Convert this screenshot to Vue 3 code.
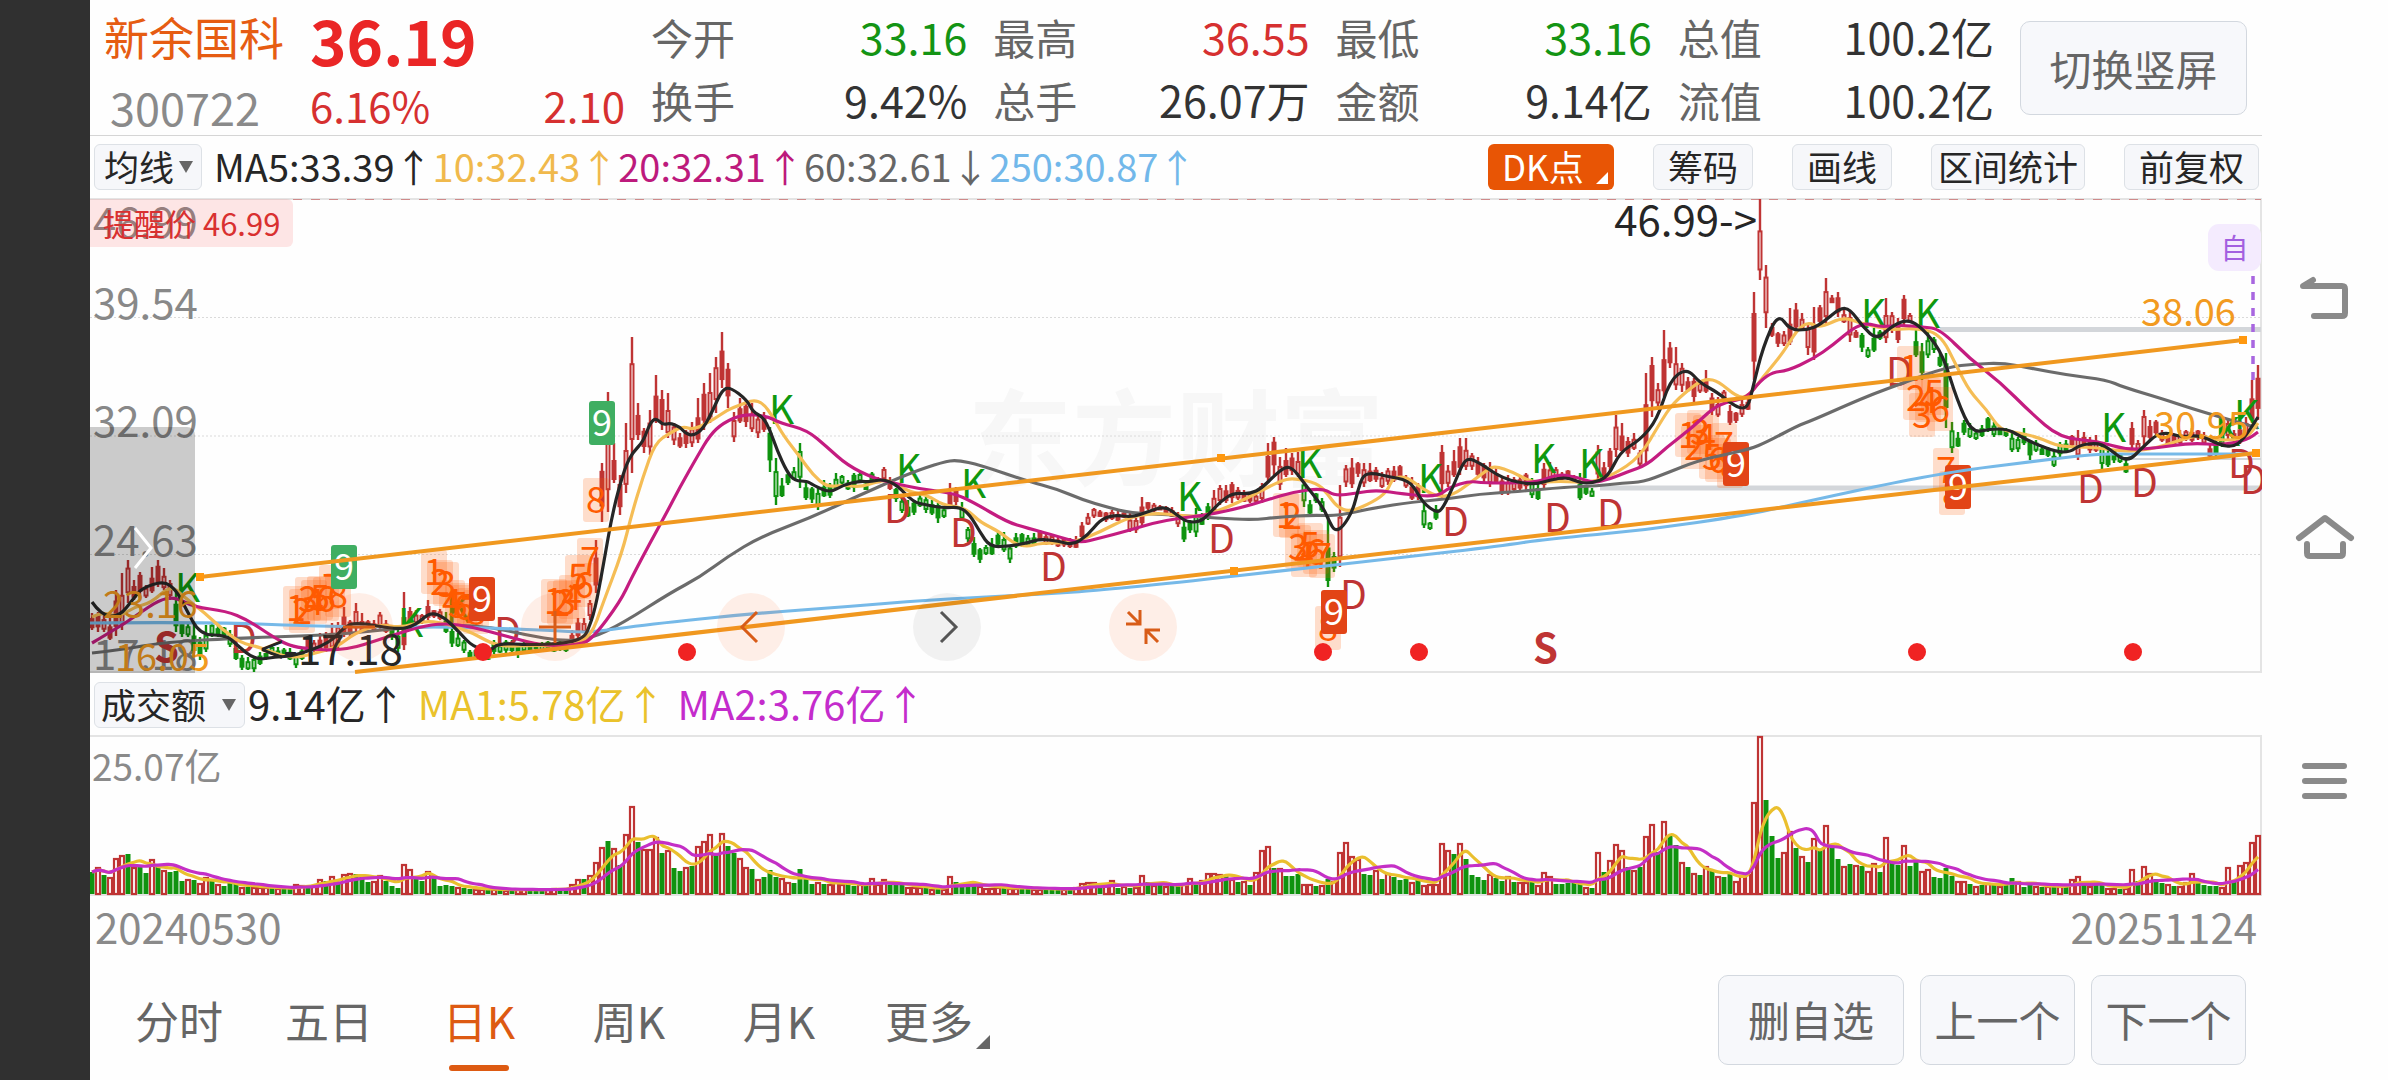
<template>
  <div class="screen">
    <div class="cutout"></div>

    <main class="content">
      <header class="quote">
        <div class="ident">
          <h1>新余国科</h1>
          <span class="code">300722</span>
        </div>
        <div class="price">
          <strong>36.19</strong>
          <div class="change">
            <span>6.16%</span>
            <span>2.10</span>
          </div>
        </div>
        <dl class="stats">
          <div v-for="s in stats" :key="s.label" class="stat">
            <dt>{{ s.label }}</dt>
            <dd :class="s.tone">{{ s.value }}</dd>
          </div>
        </dl>
        <button class="rotate" type="button">切换竖屏</button>
      </header>

      <div class="toolbar">
        <div class="pick">
          <select v-model="overlay" aria-label="主图指标">
            <option>均线</option>
          </select>
          <i class="caret"></i>
        </div>
        <div class="readout">
          <span v-for="m in maReadout" :key="m.text" :style="{ color: m.color }">{{ m.text }}</span>
        </div>
        <div class="tools">
          <button class="tool dk" type="button">DK点</button>
          <button class="tool" type="button">筹码</button>
          <button class="tool" type="button">画线</button>
          <button class="tool tight" type="button">区间统计</button>
          <button class="tool" type="button">前复权</button>
        </div>
      </div>

      <section class="kline">
        <svg class="plot" viewBox="90 198 2172 476">
          <text class="mark" x="968" y="478">东方财富</text>
          <g class="grid">
            <path d="M90 317.5H2261M90 436H2261M90 554.5H2261" />
          </g>
          <path class="frame" d="M90 199H2261V672H90" />
          <path class="limit" d="M293 199.500H2261" />
          <g class="axis">
            <text v-for="a in axis" :key="a.t" x="93" :y="a.y">{{ a.t }}</text>
          </g>

          <path d="M1940 329.500H2261M1600 488H2261" stroke="#d3d6da" stroke-width="5" />
          <path d="M2130 459H2261" stroke="#d3d6da" stroke-width="2" />

          <g v-for="c in candles" :key="c.x" :stroke="c.color" :fill="c.solid ? c.color : '#fff'">
            <path :d="`M${c.x} ${c.hi}V${c.top}M${c.x} ${c.bottom}V${c.lo}`" stroke-width="2.400" />
            <rect :x="c.x - 1.5" :y="c.top" width="3" :height="c.bottom - c.top" stroke-width="2" />
          </g>

          <g class="flags">
            <text v-for="(p, i) in kFlags" :key="'k' + i" class="k" :x="p[0] - 3" :y="p[1]">K</text>
            <text v-for="(p, i) in dFlags" :key="'d' + i" class="d" :x="p[0] - 3" :y="p[1]">D</text>
            <text class="s" x="154" y="662">S</text>
            <text class="s" x="1533" y="663">S</text>
          </g>

          <g class="counts">
            <g v-for="(n, i) in counts" :key="i">
              <rect :x="n.x" :y="n.y" width="26" height="44" rx="3" />
              <text :x="n.x + 13" :y="n.y + 35">{{ n.t }}</text>
            </g>
          </g>
          <g class="nines">
            <g v-for="(n, i) in nines" :key="i">
              <rect :x="n[0]" :y="n[1]" width="26" height="44" rx="3" :fill="n[2]" />
              <text :x="n[0] + 13" :y="n[1] + 35">9</text>
            </g>
          </g>

          <path v-for="l in maLines" :key="l.color" class="ma" :d="smooth(l.points)" :stroke="l.color" />

          <g class="channel">
            <path d="M200 577L2243 340M355 672L2256 453" />
            <rect v-for="(h, i) in handles" :key="i" :x="h[0] - 4" :y="h[1] - 4" width="8" height="8" />
          </g>

          <circle v-for="x in eventDots" :key="x" :cx="x" cy="652" r="9" fill="#f02323" />

          <text class="extreme" x="1757" y="236" text-anchor="end">46.99-></text>
          <text class="extreme" x="260" y="665">&lt;-17.18</text>
          <g class="channel-value">
            <text x="2141" y="326">38.06</text>
            <text x="2154" y="439">30.95</text>
            <text x="103" y="618">23.16</text>
            <text x="115" y="671">16.05</text>
          </g>
          <path d="M2253 276V380" stroke="#a866e0" stroke-width="3.500" stroke-dasharray="8 8" />
        </svg>

        <span class="alert">提醒价 46.99</span>
        <span class="self">自</span>
        <button class="drawer" type="button" aria-label="展开">
          <svg width="20" height="44" viewBox="0 0 20 44"><path d="M2 2L18 22L2 42" /></svg>
        </button>
        <div class="controls">
          <button type="button" aria-label="缩小">
            <svg viewBox="0 0 68 68"><path d="M18 34H50" /></svg>
          </button>
          <button type="button" aria-label="放大">
            <svg viewBox="0 0 68 68"><path d="M18 34H50M34 18V50" /></svg>
          </button>
          <button type="button" aria-label="左移">
            <svg viewBox="0 0 68 68"><path d="M40 19L25 34L40 49" /></svg>
          </button>
          <button class="plain" type="button" aria-label="右移">
            <svg viewBox="0 0 68 68"><path d="M28 19L43 34L28 49" /></svg>
          </button>
          <button type="button" aria-label="收起">
            <svg viewBox="0 0 68 68"><path d="M19 19L31 31M31 17V31H17M49 49L37 37M37 51V37H51" /></svg>
          </button>
        </div>
      </section>

      <div class="toolbar volume-bar">
        <div class="pick wide">
          <select v-model="indicator" aria-label="副图指标">
            <option>成交额</option>
          </select>
          <i class="caret"></i>
        </div>
        <div class="readout amount">
          <span>9.14亿↑</span>
          <span class="v1">MA1:5.78亿↑</span>
          <span class="v2">MA2:3.76亿↑</span>
        </div>
      </div>

      <section class="volume">
        <svg class="plot" viewBox="90 735 2172 161">
          <path class="frame" d="M90 736H2261V895H90" />
          <text class="peak" x="92" y="781">25.07亿</text>
          <template v-for="b in bars" :key="b.x">
            <rect v-if="b.up" :x="b.x - 2" :y="895 - b.h" width="4" :height="b.h - 1" fill="#fff" stroke="#bf3434" stroke-width="2.200" />
            <rect v-else :x="b.x - 2.5" :y="894 - b.h" width="5" :height="b.h" fill="#0f930f" />
          </template>
          <path class="ma" :d="average(5)" stroke="#eabf2e" />
          <path class="ma" :d="average(10)" stroke="#c42fc6" />
        </svg>
      </section>

      <div class="dates">
        <time>20240530</time>
        <time>20251124</time>
      </div>

      <footer class="bottom">
        <nav class="tabs">
          <button
            v-for="t in tabs"
            :key="t"
            type="button"
            :class="{ active: t === tab, more: t === '更多' }"
            @click="tab = t"
          >{{ t }}</button>
        </nav>
        <div class="actions">
          <button class="remove" type="button">删自选</button>
          <button type="button">上一个</button>
          <button type="button">下一个</button>
        </div>
      </footer>
    </main>

    <nav class="system">
      <button type="button" aria-label="返回">
        <svg viewBox="0 0 60 60"><path d="M19 47H47Q50 47 50 44V20Q50 17 47 17H8L18 11" /></svg>
      </button>
      <button type="button" aria-label="主页">
        <svg viewBox="0 0 60 60"><path d="M4 28L30 8L56 28M12 34V43Q12 46 15 46H45Q48 46 48 43V34" /></svg>
      </button>
      <button type="button" aria-label="菜单">
        <svg viewBox="0 0 60 60"><path d="M10 15H49M10 30H49M10 45H49" /></svg>
      </button>
    </nav>
  </div>
</template>

<script setup>
import { ref } from 'vue'

const overlay = ref('均线')
const indicator = ref('成交额')
const tabs = ['分时', '五日', '日K', '周K', '月K', '更多']
const tab = ref('日K')

const stats = [
  { label: '今开', value: '33.16', tone: 'down' },
  { label: '最高', value: '36.55', tone: 'up' },
  { label: '最低', value: '33.16', tone: 'down' },
  { label: '总值', value: '100.2亿' },
  { label: '换手', value: '9.42%' },
  { label: '总手', value: '26.07万' },
  { label: '金额', value: '9.14亿' },
  { label: '流值', value: '100.2亿' },
]

const maReadout = [
  { text: 'MA5:33.39↑', color: '#262626' },
  { text: '10:32.43↑', color: '#f0b94c' },
  { text: '20:32.31↑', color: '#bd1a7c' },
  { text: '60:32.61↓', color: '#666' },
  { text: '250:30.87↑', color: '#72b8ea' },
]

const axis = [
  { t: '46.99', y: 238 },
  { t: '39.54', y: 319 },
  { t: '32.09', y: 437 },
  { t: '24.63', y: 556 },
  { t: '17.18', y: 670 },
]

const RED = '#bf3434'
const GREEN = '#0f930f'

// one run per colour: first x, colour, then high,low of each candle
const runs = [
  [92, RED, '613,630 612,632 615,632 617,640 590,636 573,630 560,603 580,600 572,598 585,598 567,593 560,587 568,590 580,600'],
  [176, GREEN, '590,632 623,637 623,637 623,653 637,660 625,652 623,637 625,637 627,638 630,647 640,660 655,670 657,670 657,672 652,665 653,660 645,655 647,657 648,658 648,660 653,668 647,660'],
  [308, RED, '637,652 640,652 633,650 632,652 623,650 622,650 607,637 620,637 603,633 613,633 620,629 620,631 612,630 620,633'],
  [392, GREEN, '628,640 630,652'],
  [404, RED, '592,650 607,627 610,624 614,624 600,620 610,618 609,620'],
  [446, GREEN, '612,633 627,647 633,647 640,653 650,658 650,658 650,658 648,660 640,654 642,653 640,653 640,652 643,658 642,652 641,651 642,650 642,652 641,650 643,652 641,651 642,652'],
  [572, RED, '630,643 618,640 618,633 600,620 540,593 463,522 392,512 443,483 475,515 423,493 337,473 403,440 428,453 410,455 375,423 390,430 393,438 423,445 433,448 430,448 422,447 398,443 383,430 373,423 357,413 332,388 363,408 412,442 398,423 400,427 403,432 415,438 412,432'],
  [770, GREEN, '427,472 458,505 478,497 472,485 467,480 443,488 482,500 487,503 487,510 480,497 483,498 473,490 475,485 480,490 473,492 472,482 480,490 472,482'],
  [878, RED, '477,483 467,482 477,490'],
  [896, GREEN, '488,502 497,513 500,517 500,515 493,507 497,513 500,515 503,523 507,518'],
  [950, RED, '483,508 487,505'],
  [962, GREEN, '502,520 527,542 537,557 548,563 545,555 538,555 532,547 532,552 545,563 533,548 533,547 535,547 533,545'],
  [1040, RED, '530,540 532,545 535,545 537,547 538,547 538,548 536,548 522,540 513,525 508,518 510,517 512,522 510,520 510,521 512,518 513,532 518,533 497,527 502,510 503,512 505,510 506,514 507,517 512,527'],
  [1184, GREEN, '520,542 520,533 508,537 513,525 503,520'],
  [1214, RED, '490,512 485,505 485,503 482,503 487,500 490,502 492,503 493,502 483,503 443,483 437,475 457,490 448,477 453,475 452,477'],
  [1304, GREEN, '480,507 500,515 493,503 498,512 517,587 552,572'],
  [1340, RED, '485,567 465,487 458,488 462,477 463,487 463,482 467,482 472,488 468,485 466,482 465,480 475,488 477,500 483,500'],
  [1424, GREEN, '500,528 522,530 505,520'],
  [1442, RED, '445,498 465,487 450,477 438,475 438,470 453,470 457,477 463,483 462,487 467,483 477,495 475,495 477,493 475,490 473,490'],
  [1532, GREEN, '478,498 480,500'],
  [1544, RED, '463,490 462,483 467,483 472,480 470,480 475,483'],
  [1580, GREEN, '473,500 485,495 488,497'],
  [1598, RED, '445,483 462,480 448,473 415,457 423,453 437,457 433,450 450,468 373,465 357,417 383,407 330,397 342,368 347,390 363,392 377,392 378,403 380,393 370,393 393,415 397,417 390,403 405,425 412,423 400,417 397,410 292,380 199,280 265,328 323,337 332,347 331,346 308,345 303,333 313,330 323,355 307,360 305,327 278,325 295,303 292,317 310,323 312,342 330,338'],
  [1862, GREEN, '333,352 347,358 328,352 330,340'],
  [1886, RED, '298,343 312,333 318,343 295,327 313,323'],
  [1916, GREEN, '330,357 343,380 330,358 337,353 353,367 353,428 422,453 432,447 420,435 423,438 432,440 425,437 417,432 422,437 427,435 428,437 430,452 437,452 428,445 440,460 440,452 445,455 447,457 450,467 442,457 440,453'],
  [2072, RED, '435,448 430,460 432,445 437,453 435,452'],
  [2102, GREEN, '442,470 450,467 450,463 453,463 457,473'],
  [2132, RED, '422,450 440,450 410,445 420,440 420,437 430,442 432,445 434,446 430,444 430,441 428,442 430,440 432,445 443,457'],
  [2216, GREEN, '440,457 420,447'],
  [2228, RED, '420,440 430,442 428,444 417,440 380,423 365,420'],
]

const candles = runs.flatMap(([start, color, list]) =>
  list.split(' ').map((pair, i) => {
    const [hi, lo] = pair.split(',').map(Number)
    const x = start + i * 6
    const n = (x / 2) % 7
    const top = hi + ((lo - hi) * (15 + n * 5)) / 100
    const bottom = lo - ((lo - hi) * (28 - n * 3)) / 100
    return { x, color, hi, lo, top, bottom, solid: n % 2 === 0 }
  })
)

const maLines = [
  {
    color: '#6b6b6b',
    points:
      '92,653 119,650 166,642 241,638 301,636 344,634 391,629 455,625 491,627 526,635 562,641 590,639 623,623 670,593 700,577 727,557 760,537 810,518 860,495 910,473 943,462 957,460 980,465 1027,481 1057,489 1083,500 1107,507 1130,513 1173,515 1217,518 1253,520 1280,517 1313,515 1337,516 1373,508 1413,502 1447,499 1480,494 1513,492 1567,487 1597,486 1623,483 1643,482 1667,473 1697,461 1723,455 1750,449 1767,442 1797,426 1813,420 1847,405 1873,394 1903,383 1947,367 1975,364 2003,363 2030,368 2067,375 2107,380 2123,387 2163,399 2190,408 2220,417 2258,428',
  },
  {
    color: '#76b9e8',
    points:
      '90,623 205,622 312,626 384,627 473,627 580,632 593,632 660,623 760,613 843,607 927,600 1027,595 1060,593 1090,591 1173,583 1307,568 1407,557 1500,546 1547,539 1647,530 1747,515 1813,500 1897,482 1947,473 1980,468 2030,462 2093,454 2133,454 2213,454 2257,454',
  },
  {
    color: '#f5bd55',
    points:
      '92,617 101,612 119,617 134,607 151,603 171,585 184,597 205,613 223,630 241,643 259,647 291,659 316,653 337,647 355,633 380,624 401,628 426,620 451,625 473,633 498,647 537,645 569,647 591,637 603,603 622,553 632,513 643,477 655,443 670,433 683,426 693,430 713,420 727,410 740,405 753,400 763,403 773,417 783,435 800,457 813,475 827,487 843,485 860,487 877,482 887,480 897,485 910,492 927,495 943,505 960,507 970,512 980,522 1000,532 1013,543 1027,547 1040,543 1073,543 1100,532 1127,518 1153,513 1177,515 1200,517 1220,510 1237,503 1257,493 1280,481 1293,478 1317,483 1327,493 1337,507 1350,512 1373,502 1387,492 1393,477 1407,477 1420,487 1437,497 1453,495 1470,483 1487,470 1495,466 1513,472 1533,483 1560,481 1590,483 1613,475 1640,457 1660,423 1673,403 1697,383 1707,379 1718,381 1737,397 1748,397 1763,377 1783,353 1797,330 1808,322 1820,328 1843,317 1860,323 1877,327 1893,330 1913,328 1940,333 1957,367 1970,392 1987,410 2000,430 2020,433 2040,438 2060,447 2093,447 2127,452 2157,448 2180,440 2200,435 2217,440 2233,440 2247,438 2258,423',
  },
  {
    color: '#c41c80',
    points:
      '92,643 119,627 137,615 159,600 175,597 194,607 226,611 248,620 273,637 294,648 344,651 384,638 419,627 444,623 473,627 509,637 544,646 580,645 593,638 620,602 632,577 650,543 667,512 680,487 697,457 710,435 723,423 743,414 767,416 780,423 807,430 827,447 847,465 873,478 893,483 920,489 953,493 973,502 1007,522 1027,528 1060,537 1080,543 1100,538 1127,531 1153,523 1180,518 1207,515 1240,508 1267,500 1293,492 1323,488 1335,496 1357,493 1377,490 1403,494 1437,497 1450,487 1470,481 1483,483 1537,483 1557,474 1577,477 1593,483 1610,479 1627,472 1647,465 1667,447 1693,427 1713,408 1727,402 1747,398 1760,381 1773,372 1787,371 1813,359 1833,345 1853,328 1867,323 1880,327 1900,325 1923,327 1940,329 1970,359 2000,382 2030,412 2060,438 2097,441 2127,450 2157,448 2190,443 2223,445 2247,440 2258,432',
  },
  {
    color: '#262626',
    points:
      '92,602 101,615 119,617 134,598 142,588 164,581 176,590 185,607 200,635 226,635 237,645 255,660 275,657 294,656 330,643 344,627 357,622 398,630 416,625 430,612 444,617 459,632 473,647 491,651 498,643 530,645 569,643 584,637 588,630 595,610 603,567 613,510 625,467 633,452 643,442 650,423 656,418 663,425 670,423 680,427 685,433 693,436 703,429 713,410 722,390 730,387 747,400 753,412 763,417 770,430 777,450 787,472 795,481 807,481 813,485 830,493 843,485 860,481 870,482 883,479 897,485 913,502 927,505 943,508 960,507 970,515 980,532 990,547 1010,546 1027,543 1040,539 1058,541 1073,545 1088,535 1100,520 1113,515 1133,517 1147,512 1165,506 1177,515 1187,522 1200,522 1210,513 1220,502 1233,493 1250,494 1262,488 1275,475 1285,467 1293,468 1307,487 1323,507 1330,523 1335,531 1343,527 1353,510 1358,490 1363,475 1373,473 1390,477 1403,479 1413,485 1423,503 1437,513 1443,508 1453,487 1462,465 1468,458 1480,463 1503,479 1533,485 1550,480 1567,477 1580,483 1593,483 1608,477 1620,452 1640,440 1657,420 1670,380 1687,368 1700,383 1717,392 1737,408 1748,408 1753,387 1763,347 1778,313 1790,330 1807,330 1820,325 1840,308 1850,309 1863,327 1877,340 1893,325 1910,319 1927,333 1943,355 1957,400 1972,433 1990,429 2007,429 2020,436 2033,443 2057,452 2070,452 2080,445 2097,443 2107,447 2127,463 2143,447 2157,434 2170,433 2180,437 2200,435 2220,445 2233,447 2243,440 2258,417',
  },
]

// rounds the corners of a polyline through the midpoints of its segments
function smooth(points) {
  const p = points.split(' ').map((s) => s.split(',').map(Number))
  let d = `M${p[0]}`
  for (let i = 1; i < p.length - 1; i++) {
    d += `Q${p[i]} ${(p[i][0] + p[i + 1][0]) / 2},${(p[i][1] + p[i + 1][1]) / 2}`
  }
  return d + `L${p[p.length - 1]}`
}

const kFlags = [
  [178, 602], [401, 637], [449, 623], [772, 424], [899, 483], [964, 498], [1180, 511], [1300, 478],
  [1421, 493], [1534, 473], [1582, 478], [1864, 328], [1918, 328], [2104, 442], [2237, 429], [2218, 446],
]
const dFlags = [
  [233, 653], [497, 646], [887, 523], [953, 547], [1043, 581], [1211, 553], [1343, 609], [1445, 536],
  [1547, 532], [1600, 528], [1889, 386], [2080, 503], [2134, 497], [2231, 478], [2243, 494],
]

// nine-turn counting, digits 1 to 8: x of the first box, then the box tops
const counts = [
  [283, [586, 589, 577, 580, 576, 577, 565, 573]],
  [421, [550, 560, 562, 580, 583, 585, 588, 590]],
  [541, [579, 581, 580, 575, 555, 563, 538, 478]],
  [1273, [493, 494, 525, 533, 523, 530, 534, 606]],
  [1675, [413, 425, 410, 415, 435, 438, 423, 444]],
  [1897, [346, 376, 393, 378, 371, 387, 448, 471]],
].flatMap(([x, tops]) => tops.map((y, i) => ({ x: x + i * 6, y, t: i + 1 })))

const nines = [
  [331, 545, '#3fae62'],
  [589, 401, '#3fae62'],
  [469, 577, '#e24416'],
  [1321, 590, '#e24416'],
  [1723, 442, '#e24416'],
  [1945, 465, '#e24416'],
]

const handles = [[200, 577], [1221, 458], [2243, 340], [1234, 571], [2256, 453]]
const eventDots = [483, 687, 1323, 1419, 1917, 2133]

const turnover =
  '22g 27r 19g 17r 36r 39r 40g 27r 27g 21g 35r 27g 24r 22g 23g 13g 15r 14g 11r 17r 14g 10r 8g 11g 10g 7r 7g 7r 7r 7r ' +
  '6g 6r 5g 5g 10r 9r 9g 9r 15r 13g 18r 12g 20r 21r 20g 19g 12g 13r 19r 13g 8g 6g 30r 25r 16g 13g 23r 16g 8g 9g ' +
  '8g 7r 6g 5g 5r 5r 5g 5r 4g 4r 4g 5r 5r 4g 4g 4g 5r 6r 4g 5g 10r 15r 15g 19r 32r 47r 53g 46r 29g 60r ' +
  '88r 52g 45r 45r 57r 41g 44r 26g 23g 27r 28g 48r 53r 60r 41g 61r 48g 41g 36r 27r 25g 15r 17g 24g 17g 16r 12r 11g 25g 15g ' +
  '10g 12r 10g 10r 13r 10r 10g 8g 10r 8g 16r 10r 15r 9g 9g 9g 7r 7r 7r 6g 5r 5g 5r 18r 12g 10g 10g 10g 8r 6r ' +
  '6r 7r 6g 6r 6r 6g 6g 5r 5r 5g 5g 5g 5r 5g 7r 11r 12r 12r 6g 9r 14r 6g 8r 6g 7r 19r 12g 9r 9g 8r ' +
  '9g 9g 10r 16r 9g 14r 21r 21r 20r 18g 15r 12g 13r 9g 22r 44r 48r 26g 26r 18g 18g 20g 10r 10r 8g 9r 15g 13r 42r 52r ' +
  '38r 35r 20g 19g 24r 15g 21r 17g 14g 15g 12r 15g 9r 10r 10r 51r 44r 40g 51r 35g 19g 17g 14g 20r 16g 13g 18r 12g 12r 12r ' +
  '12g 9r 22r 18r 10g 10g 11g 11g 10g 7r 6g 42r 22g 34r 50r 44r 27g 24r 27g 58r 70r 42g 73r 58g 49g 32r 27g 21r 19g 28r ' +
  '24g 18r 17g 20g 13r 19r 20r 92r 158r 94g 58g 36g 42r 63r 46g 38r 32g 56r 44g 69r 47g 35g 28r 30g 29r 28g 23r 31r 22g 57r ' +
  '31g 29g 49r 28g 32g 23r 25r 17g 16g 26g 18g 13r 13r 10g 8r 9g 11r 11g 8r 9g 16g 13r 7g 10g 8r 7g 8r 7g 8r 7g ' +
  '15r 18r 10g 8r 9g 9g 6r 6r 5g 6r 25r 13g 28r 21r 15g 11g 10r 8g 8r 12r 21r 11g 9g 8g 8g 7r 27r 14g 29r 32r 52r 59r'

const bars = turnover.split(' ').map((s, i) => ({
  x: 92 + i * 6,
  h: parseInt(s),
  up: s.endsWith('r'),
}))

function average(days) {
  const points = bars.map((b, i) => {
    const part = bars.slice(Math.max(0, i - days + 1), i + 1)
    const mean = part.reduce((sum, v) => sum + v.h, 0) / part.length
    return `${b.x},${(894 - mean).toFixed(1)}`
  })
  return smooth(points.join(' '))
}
</script>

<style>
body {
  margin: 0;
  background: #fefefe;
}
</style>

<style scoped>
.screen {
  display: flex;
  min-height: 100vh;
  font-family: "Noto Sans CJK SC", sans-serif;
  color: #666;
}
button,
select {
  font-family: inherit;
  cursor: pointer;
}
.cutout {
  flex: none;
  width: 90px;
  background: #303030;
}
.content {
  flex: 1;
  min-width: 0;
}

/* quote header */
.quote {
  display: flex;
  height: 135px;
  border-bottom: 1px solid #d5d5d5;
}
.ident {
  width: 206px;
  padding-left: 14px;
}
h1 {
  margin: 7px 0 0;
  font-size: 45px;
  line-height: 60px;
  font-weight: 400;
  color: #e65c12;
}
.code {
  display: block;
  padding-left: 6px;
  margin-top: 10px;
  font-size: 45px;
  line-height: 60px;
  color: #8a8a8a;
}
.price {
  width: 315px;
  color: #d63030;
}
.price strong {
  display: block;
  margin-top: 3px;
  font-size: 62px;
  line-height: 72px;
  color: #ea2626;
}
.change {
  display: flex;
  justify-content: space-between;
  font-size: 42px;
  line-height: 60px;
}
.stats {
  flex: 1;
  display: grid;
  grid-template-columns: repeat(4, 1fr);
  grid-auto-rows: 63px;
  column-gap: 26px;
  margin: 5px 26px 0;
  font-size: 42px;
  line-height: 63px;
}
.stat {
  display: flex;
  justify-content: space-between;
}
.stat dd {
  margin: 0;
  font-size: 43px;
  color: #333;
}
.stat .up {
  color: #d63030;
}
.stat .down {
  color: #149414;
}
.rotate {
  width: 227px;
  height: 94px;
  margin: 21px 15px 0 0;
  padding: 0;
  border: 1px solid #d3d8df;
  border-radius: 10px;
  background: #f7f8fb;
  font-size: 42px;
  line-height: 92px;
  color: #666;
}

/* indicator rows */
.toolbar {
  display: flex;
  align-items: center;
  height: 62px;
  padding: 0 3px 0 4px;
}
.volume-bar {
  height: 61px;
}
.pick {
  position: relative;
}
.pick select {
  box-sizing: border-box;
  display: block;
  width: 108px;
  height: 46px;
  padding: 0 0 2px 9px;
  border: 1px solid #dde1e6;
  border-radius: 6px;
  background: #f6f7fa;
  appearance: none;
  font-size: 35px;
  line-height: 42px;
  color: #262626;
}
.pick.wide select {
  width: 151px;
  padding-left: 6px;
}
.caret {
  position: absolute;
  top: 17px;
  right: 9px;
  border: 7px solid transparent;
  border-top: 12px solid #666;
  border-bottom: 0;
  pointer-events: none;
}
.readout {
  display: flex;
  padding: 0 0 2px 12px;
  font-size: 38px;
  line-height: 58px;
  white-space: nowrap;
}
.readout.amount {
  gap: 12px;
  padding: 0 0 4px 3px;
  font-size: 40px;
  color: #262626;
}
.v1 {
  color: #eac22b;
}
.v2 {
  color: #c42ccc;
}
.tools {
  display: flex;
  gap: 39px;
  margin-left: auto;
}
.tool {
  height: 46px;
  padding: 0 14px 2px;
  border: 1px solid #dde1e6;
  border-radius: 6px;
  background: #f6f7fa;
  font-size: 35px;
  line-height: 42px;
  color: #262626;
}
.tool.tight {
  padding: 0 6px 2px;
}
.tool.dk {
  position: relative;
  width: 126px;
  padding: 0 14px 2px;
  border: 0;
  background: #e85505;
  text-align: left;
  color: #fff;
}
.tool.dk::after {
  content: "";
  position: absolute;
  right: 6px;
  bottom: 6px;
  border-left: 12px solid transparent;
  border-bottom: 12px solid #fff;
}

/* charts */
.kline {
  position: relative;
}
.plot {
  display: block;
  width: 100%;
  height: auto;
  fill: none;
}
.plot text {
  fill: currentColor;
}
.mark {
  font-size: 104px;
  font-weight: 700;
  color: #f7f7f7;
}
.grid path {
  stroke: #dadada;
  stroke-dasharray: 2 2;
}
.frame {
  stroke: #e4e4e4;
  stroke-width: 2;
}
.limit {
  stroke: #cf8a8a;
  stroke-dasharray: 9 9;
}
.axis {
  font-size: 42px;
  color: #888;
}
.flags {
  font-size: 39px;
}
.k {
  color: #0f980f;
}
.d {
  color: #bf3434;
}
.s {
  font-size: 40px;
  font-weight: 700;
  color: #bf3434;
}
.counts rect {
  fill: #ff5a00;
  fill-opacity: 0.2;
}
.counts text,
.nines text {
  font-size: 36px;
  text-anchor: middle;
}
.counts {
  color: #ff5a00;
}
.nines {
  color: #fff;
}
.ma {
  stroke-width: 3.2;
  stroke-linejoin: round;
}
.channel path {
  stroke: #f0981f;
  stroke-width: 4;
}
.channel rect {
  fill: #ff980f;
}
.extreme {
  font-size: 42px;
  color: #262626;
}
.channel-value {
  font-size: 38px;
  color: #f29a20;
}
.peak {
  font-size: 37px;
  color: #8a8a8a;
}
.alert {
  position: absolute;
  top: 1px;
  left: 0;
  width: 190px;
  padding-left: 13px;
  border-radius: 0 6px 6px 0;
  background: rgba(250, 60, 60, 0.13);
  font-size: 31px;
  line-height: 48px;
  white-space: nowrap;
  color: #d93030;
}
.self {
  position: absolute;
  top: 26px;
  right: 1px;
  width: 53px;
  border-radius: 11px;
  background: #f4ebfe;
  font-size: 28px;
  line-height: 47px;
  text-align: center;
  color: #a35fe0;
}
.drawer {
  position: absolute;
  left: 0;
  bottom: 1px;
  width: 105px;
  height: 246px;
  padding: 0;
  border: 0;
  border-radius: 0 8px 0 0;
  background: rgba(0, 0, 0, 0.2);
}
.drawer svg {
  fill: none;
  stroke: #fff;
  stroke-width: 3;
}
.controls {
  position: absolute;
  left: 235px;
  bottom: 13px;
  display: flex;
  gap: 128px;
}
.controls button {
  width: 68px;
  height: 68px;
  padding: 0;
  border: 0;
  border-radius: 50%;
  background: rgba(255, 100, 30, 0.1);
}
.controls .plain {
  background: rgba(0, 0, 0, 0.05);
}
.controls svg {
  display: block;
  fill: none;
  stroke: #d85c18;
  stroke-width: 3;
}
.controls .plain svg {
  stroke: #555;
}
.dates {
  display: flex;
  justify-content: space-between;
  padding: 0 5px;
  font-size: 42px;
  line-height: 60px;
  color: #8a8a8a;
}

/* period tabs */
.bottom {
  display: flex;
  justify-content: space-between;
  margin-top: 19px;
  padding: 0 16px;
}
.tabs {
  display: flex;
}
.tabs button {
  position: relative;
  width: 150px;
  height: 96px;
  padding: 0 4px 6px 0;
  border: 0;
  background: none;
  font-size: 44px;
  line-height: 90px;
  color: #666;
}
.tabs .active {
  color: #dd5a12;
}
.tabs .active::after {
  content: "";
  position: absolute;
  left: 43px;
  bottom: 0;
  width: 60px;
  height: 6px;
  border-radius: 3px;
  background: #dd5a12;
}
.tabs .more::after {
  content: "";
  position: absolute;
  right: 16px;
  bottom: 22px;
  border-left: 14px solid transparent;
  border-bottom: 14px solid #666;
}
.actions {
  display: flex;
  gap: 16px;
}
.actions button {
  width: 155px;
  height: 90px;
  padding: 0 0 2px;
  border: 1px solid #d3d8df;
  border-radius: 10px;
  background: #f7f8fb;
  font-size: 42px;
  line-height: 84px;
  color: #666;
}
.actions .remove {
  width: 186px;
}

/* system navigation */
.system {
  flex: none;
  display: flex;
  flex-direction: column;
  align-items: center;
  justify-content: center;
  gap: 181px;
  width: 126px;
}
.system button {
  width: 60px;
  height: 60px;
  padding: 0;
  border: 0;
  background: none;
}
.system svg {
  display: block;
  fill: none;
  stroke: #8a8a8a;
  stroke-width: 6;
  stroke-linecap: round;
  stroke-linejoin: round;
}
</style>
